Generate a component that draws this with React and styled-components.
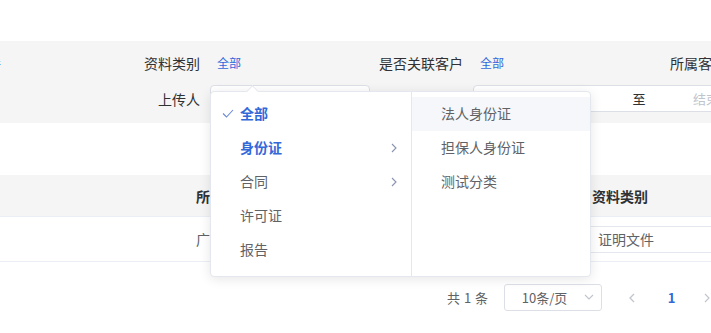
import React from "react";
import styled, { createGlobalStyle } from "styled-components";

const GlobalStyle = createGlobalStyle`
  html, body {
    margin: 0;
    padding: 0;
    background: #fff;
    overflow: hidden;
  }
  body {
    font-family: "Noto Sans CJK SC", "Liberation Sans", sans-serif;
    color: #303133;
    font-size: 14px;
  }
`;

const BLUE = "#3368d9";

const Page = styled.div`
  position: relative;
  width: 711px;
  height: 333px;
  overflow: hidden;
`;

const TopBlank = styled.div`
  height: 41px;
`;

const FilterPanel = styled.div`
  background: #f5f5f5;
  padding: 8px 0 11px;
  display: flex;
  flex-direction: column;
  gap: 8px;
`;

const FilterRow = styled.div`
  display: grid;
  grid-template-columns: 100px 100px 163px 100px 163px 100px 163px;
  align-items: center;
  height: ${(p) => p.$h}px;
  white-space: nowrap;
`;

const Label = styled.div`
  text-align: right;
  font-size: 14px;
  line-height: 20px;
  color: #303133;
`;

const LinkValue = styled.span`
  padding-left: 17px;
  font-size: 12px;
  line-height: 18px;
  color: ${BLUE};
`;

const EdgeGlyph = styled.span`
  display: inline-block;
  margin-left: -11px;
  font-size: 12px;
  color: ${BLUE};
`;

const TextInput = styled.div`
  box-sizing: border-box;
  margin-left: 10px;
  width: ${(p) => p.$w}px;
  height: 27px;
  background: #fff;
  border: 1px solid #dcdfe6;
  border-radius: 4px;
  display: flex;
  align-items: center;
  font-size: 13px;
  line-height: 25px;
`;

const DateIcon = styled.span`
  width: 20px;
  margin-left: 10px;
  display: flex;
  align-items: center;
  color: #c0c4cc;
`;

const DatePart = styled.span`
  flex-shrink: 0;
  width: ${(p) => p.$w}px;
  text-align: center;
  color: ${(p) => (p.$placeholder ? "#c0c4cc" : "#303133")};
`;

const Table = styled.div`
  margin-top: 52px;
`;

const TableRow = styled.div`
  display: grid;
  grid-template-columns: 186px 396px 1fr;
  align-items: center;
  height: ${(p) => p.$h}px;
  background: ${(p) => (p.$head ? "#f5f5f5" : "#fff")};
  border-bottom: 1px solid #ebeef5;
  font-size: 14px;
  font-weight: ${(p) => (p.$head ? 700 : 400)};
  color: ${(p) => (p.$head ? "#303133" : "#606266")};
  white-space: nowrap;
  overflow: hidden;
`;

const Cell = styled.div`
  padding-left: ${(p) => (p.$pl != null ? p.$pl : 10)}px;
  overflow: hidden;
`;

const CellBox = styled.div`
  box-sizing: border-box;
  height: 27px;
  border: 1px solid #e4e7ed;
  border-right: none;
  padding-left: 14px;
  display: flex;
  align-items: center;
  color: #606266;
`;

const Pager = styled.div`
  margin-top: 22px;
  padding-left: 447px;
  display: flex;
  align-items: center;
  height: 27px;
  font-size: 13px;
  color: #606266;
  white-space: nowrap;
  & > * {
    flex-shrink: 0;
  }
`;

const Total = styled.span`
  word-spacing: 1px;
`;

const SizeSelect = styled.div`
  position: relative;
  box-sizing: border-box;
  margin-left: 16px;
  width: 98px;
  height: 27px;
  border: 1px solid #dcdfe6;
  border-radius: 3px;
  padding: 0 25px 0 8px;
  display: flex;
  align-items: center;
  justify-content: center;
  color: #606266;
`;

const SelectArrow = styled.span`
  position: absolute;
  right: 7px;
  top: 9px;
  display: flex;
`;

const PagerBtn = styled.span`
  width: 35px;
  margin-left: ${(p) => p.$ml || 0}px;
  display: flex;
  justify-content: center;
  align-items: center;
  font-weight: 700;
  color: ${(p) => (p.$active ? BLUE : "#c0c4cc")};
`;

const Popup = styled.div`
  position: absolute;
  left: 210px;
  top: 91px;
  display: flex;
  background: #fff;
  border: 1px solid #e4e7ed;
  border-radius: 4px;
  box-shadow: 0 2px 12px rgba(0, 0, 0, 0.1);
`;

const PopArrow = styled.span`
  position: absolute;
  left: 37px;
  top: -5px;
  width: 8px;
  height: 8px;
  background: #fff;
  border-left: 1px solid #e4e7ed;
  border-top: 1px solid #e4e7ed;
  transform: rotate(45deg);
`;

const Menu = styled.ul`
  list-style: none;
  margin: 0;
  padding: 5px 0 7px;
  width: ${(p) => p.$w}px;
  height: 172px;
  border-right: ${(p) => (p.$last ? "none" : "1px solid #e4e7ed")};
`;

const MenuItem = styled.li`
  position: relative;
  box-sizing: border-box;
  height: 34px;
  display: flex;
  align-items: center;
  padding: 0 14px 3px 29px;
  font-size: 14px;
  color: ${(p) => (p.$active ? BLUE : "#606266")};
  font-weight: ${(p) => (p.$active ? 700 : 400)};
  background: ${(p) => (p.$hover ? "#f5f7fa" : "transparent")};
`;

const Check = styled.span`
  position: absolute;
  left: 11px;
  top: 12px;
  display: flex;
`;

const Chevron = styled.span`
  margin-left: auto;
  padding-top: 2px;
  display: flex;
`;

const ChevronRight = ({ color = "#8a93b0", w = 6, h = 10 }) => (
  <svg width={w} height={h} viewBox="0 0 6 10">
    <polyline points="1,1 5,5 1,9" fill="none" stroke={color} strokeWidth="1.1" />
  </svg>
);

const ChevronLeft = ({ color = "#c0c4cc" }) => (
  <svg width="6" height="10" viewBox="0 0 6 10">
    <polyline points="5,1 1,5 5,9" fill="none" stroke={color} strokeWidth="1.3" />
  </svg>
);

const leftItems = [
  { text: "全部", checked: true, active: true },
  { text: "身份证", active: true, sub: true },
  { text: "合同", sub: true },
  { text: "许可证" },
  { text: "报告" },
];

const rightItems = ["法人身份证", "担保人身份证", "测试分类"];

export default function App() {
  return (
    <Page>
      <GlobalStyle />
      <TopBlank />
      <FilterPanel>
        <FilterRow $h={28}>
          <div>
            <EdgeGlyph>件</EdgeGlyph>
          </div>
          <Label>资料类别</Label>
          <LinkValue>全部</LinkValue>
          <Label>是否关联客户</Label>
          <LinkValue>全部</LinkValue>
          <Label>所属客户</Label>
          <LinkValue>全部</LinkValue>
        </FilterRow>
        <FilterRow $h={27}>
          <div />
          <Label>上传人</Label>
          <TextInput $w={160} />
          <Label>上传时间</Label>
          <TextInput $w={350}>
            <DateIcon>
              <svg width="12" height="12" viewBox="0 0 12 12">
                <circle cx="6" cy="6" r="5" fill="none" stroke="#c0c4cc" />
                <polyline points="6,3 6,6 8,7" fill="none" stroke="#c0c4cc" />
              </svg>
            </DateIcon>
            <DatePart $w={115} $placeholder>开始日期</DatePart>
            <DatePart $w={40}>至</DatePart>
            <DatePart $w={120} $placeholder>结束日期</DatePart>
          </TextInput>
        </FilterRow>
      </FilterPanel>

      <Table>
        <TableRow $head $h={41}>
          <Cell />
          <Cell>所属客户</Cell>
          <Cell>资料类别</Cell>
        </TableRow>
        <TableRow $h={44}>
          <Cell />
          <Cell>广州某某贸易有限公司</Cell>
          <Cell $pl={1}>
            <CellBox>证明文件</CellBox>
          </Cell>
        </TableRow>
      </Table>

      <Pager>
        <Total>共 1 条</Total>
        <SizeSelect>
          10条/页
          <SelectArrow>
            <svg width="10" height="6" viewBox="0 0 10 6">
              <polyline points="1,1 5,5 9,1" fill="none" stroke="#c0c4cc" strokeWidth="1.1" />
            </svg>
          </SelectArrow>
        </SizeSelect>
        <PagerBtn $ml={12}>
          <ChevronLeft />
        </PagerBtn>
        <PagerBtn $ml={5} $active>
          1
        </PagerBtn>
        <PagerBtn>
          <ChevronRight color="#c0c4cc" />
        </PagerBtn>
      </Pager>

      <Popup>
        <PopArrow />
        <Menu $w={200}>
          {leftItems.map((it) => (
            <MenuItem key={it.text} $active={it.active}>
              {it.checked && (
                <Check>
                  <svg width="12" height="9" viewBox="0 0 12 9">
                    <polyline points="1,4.5 4.5,8 11,1" fill="none" stroke="#6b8ad6" strokeWidth="1.1" />
                  </svg>
                </Check>
              )}
              {it.text}
              {it.sub && (
                <Chevron>
                  <ChevronRight />
                </Chevron>
              )}
            </MenuItem>
          ))}
        </Menu>
        <Menu $w={178} $last>
          {rightItems.map((t, i) => (
            <MenuItem key={t} $hover={i === 0}>
              {t}
            </MenuItem>
          ))}
        </Menu>
      </Popup>
    </Page>
  );
}
